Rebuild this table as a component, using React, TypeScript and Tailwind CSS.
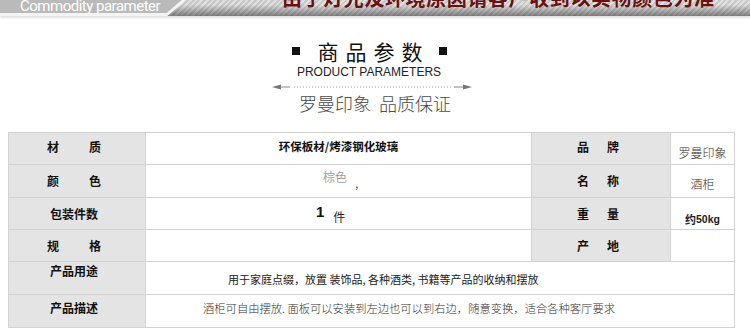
import React from 'react';

const cjk = "font-['Noto_Sans_CJK_SC',sans-serif]";

const Label: React.FC<{ a: string; b?: string; gap?: string; className?: string }> = ({ a, b, gap = 'gap-[30px]', className = '' }) => (
  <div className={`flex justify-center ${gap} text-[12px] leading-[12px] font-bold text-[#111] ${className}`}>
    <span>{a}</span>
    {b && <span>{b}</span>}
  </div>
);

const ArrowLine: React.FC = () => (
  <svg width="200" height="6" viewBox="0 0 200 6">
    <path d="M0 3 L9 0.5 L9 5.5 Z" fill="#777" />
    <line x1="8" y1="3" x2="18" y2="3" stroke="#888" strokeWidth="1" />
    <line x1="22" y1="3" x2="180" y2="3" stroke="#999" strokeWidth="1" strokeDasharray="1 2" />
    <line x1="182" y1="3" x2="192" y2="3" stroke="#888" strokeWidth="1" />
    <path d="M200 3 L191 0.5 L191 5.5 Z" fill="#777" />
  </svg>
);

export default function App() {
  return (
    <div className={`w-[750px] h-[332px] overflow-hidden bg-white ${cjk}`}>
      {/* Banner */}
      <div className="relative h-[16px] overflow-hidden flex items-start bg-[linear-gradient(to_bottom,rgba(0,0,0,0)_30%,rgba(0,0,0,0.42)_100%),repeating-linear-gradient(135deg,#c8c8c8_0px,#c8c8c8_2px,#e0e0e0_2px,#e0e0e0_4px)] shadow-[0_2px_2px_rgba(0,0,0,0.12)]">
        <div className="w-[186px] h-[16px] shrink-0 bg-[#f4f4f4] [clip-path:polygon(0_0,100%_0,90%_100%,0_100%)]">
          <div className="w-[183px] h-[14px] bg-[#bababa] [clip-path:polygon(0_0,100%_0,91%_100%,0_100%)]">
            <div className="pl-[20px] mt-[-1px] font-['Roboto',sans-serif] text-[15px] leading-[15px] tracking-[-0.5px] text-white whitespace-nowrap">
              Commodity parameter
            </div>
          </div>
        </div>
        <div className="ml-[96px] mt-[-12px] text-[20px] leading-[20px] font-bold tracking-[0.6px] text-[#6b1010] whitespace-nowrap">
          由于灯光及环境原因请客户收到以实物颜色为准
        </div>
      </div>

      {/* Heading */}
      <div className="flex flex-col items-center pr-[12px]">
        <div className="mt-[24px] flex items-center text-[#111]">
          <span className="w-[8px] h-[8px] bg-[#111]" />
          <span className="ml-[18px] text-[21px] leading-[22px] tracking-[7px]">商品参数</span>
          <span className="ml-[9px] w-[8px] h-[8px] bg-[#111]" />
        </div>
        <div className="mt-[3px] font-['Liberation_Sans',sans-serif] text-[12px] leading-[14px] text-[#222]">
          PRODUCT PARAMETERS
        </div>
        <div className="mt-[5px] ml-[6px]">
          <ArrowLine />
        </div>
        <div className="mt-[4px] ml-[12px] text-[18px] leading-[18px] font-light text-[#4a4a4a] whitespace-pre">
          罗曼印象  品质保证
        </div>
      </div>

      {/* Table */}
      <div className="mt-[20px] ml-[8px] w-[727px] grid grid-cols-[137px_386px_139px_64px] grid-rows-[32px_33px_32px_32px_33px_33px] border-t border-l border-[#d2d2d2] [&>div]:border-r [&>div]:border-b [&>div]:border-[#d2d2d2]">
        {/* row 1 */}
        <div className="bg-[#e4e4e4] flex flex-col justify-center pb-[4px] pr-[6px]">
          <Label a="材" b="质" />
        </div>
        <div className="flex justify-center pt-[7px] text-[11.5px] leading-[12px] font-bold text-[#111]">
          环保板材/烤漆钢化玻璃
        </div>
        <div className="bg-[#e4e4e4] flex flex-col justify-center pb-[4px] pr-[6px]">
          <Label a="品" b="牌" gap="gap-[18px]" />
        </div>
        <div className="flex justify-center pt-[14px] text-[12px] leading-[12px] font-light text-[#333]">
          罗曼印象
        </div>

        {/* row 2 */}
        <div className="bg-[#e4e4e4] flex flex-col justify-center pr-[6px]">
          <Label a="颜" b="色" />
        </div>
        <div className="flex items-start pl-[177px] pt-[6px] text-[12px] leading-[12px] text-[#a0a0a0]">
          <span>棕色</span>
          <span className="ml-[8px] mt-[6px] text-[#555]">,</span>
        </div>
        <div className="bg-[#e4e4e4] flex flex-col justify-center pr-[6px]">
          <Label a="名" b="称" gap="gap-[18px]" />
        </div>
        <div className="flex justify-center pt-[13px] text-[12px] leading-[12px] font-light text-[#333]">
          酒柜
        </div>

        {/* row 3 */}
        <div className="bg-[#e4e4e4] flex flex-col justify-center pr-[6px]">
          <Label a="包装件数" />
        </div>
        <div className="flex items-start pl-[170px] pt-[6px]">
          <span className="font-['Liberation_Sans',sans-serif] text-[15px] leading-[15px] font-bold text-[#111]">1</span>
          <span className="ml-[9px] mt-[7px] text-[12px] leading-[12px] text-[#222]">件</span>
        </div>
        <div className="bg-[#e4e4e4] flex flex-col justify-center pr-[6px]">
          <Label a="重" b="量" gap="gap-[18px]" />
        </div>
        <div className="flex justify-center pt-[15px] text-[11px] leading-[12px] font-bold text-[#222]">
          约<span className="font-['Liberation_Sans',sans-serif] text-[10.5px]">50kg</span>
        </div>

        {/* row 4 */}
        <div className="bg-[#e4e4e4] flex flex-col justify-center pr-[6px]">
          <Label a="规" b="格" />
        </div>
        <div />
        <div className="bg-[#e4e4e4] flex flex-col justify-center pr-[6px]">
          <Label a="产" b="地" gap="gap-[18px]" />
        </div>
        <div />

        {/* row 5 */}
        <div className="bg-[#e4e4e4] pt-[3px] pr-[6px]">
          <Label a="产品用途" />
        </div>
        <div className="col-span-3 pl-[82px] pt-[11px] text-[11px] leading-[12px] text-[#222] whitespace-pre">
          用于家庭点缀，放置 装饰品, 各种酒类, 书籍等产品的收纳和摆放
        </div>

        {/* row 6 */}
        <div className="bg-[#e4e4e4] pt-[7px] pr-[6px]">
          <Label a="产品描述" />
        </div>
        <div className="col-span-3 pl-[57px] pt-[7px] text-[11.3px] leading-[12px] font-light text-[#333]">
          酒柜可自由摆放. 面板可以安装到左边也可以到右边，随意变换，适合各种客厅要求
        </div>
      </div>
    </div>
  );
}
